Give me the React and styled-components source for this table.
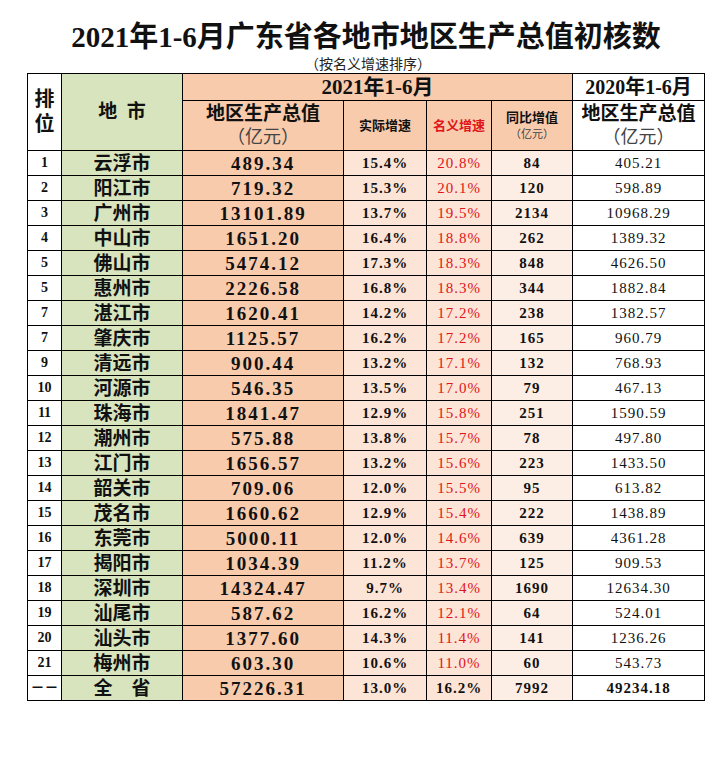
import React from 'react';
import styled, { createGlobalStyle } from 'styled-components';

const GlobalStyle = createGlobalStyle`
  html, body {
    margin: 0;
    padding: 0;
    background: #ffffff;
  }

  body {
    font-family: "Liberation Serif", "Noto Sans CJK SC", serif;
    color: #111;
  }
`;

const GREEN = '#d7e4bd';
const PEACH = '#f8cbad';
const LIGHT = '#fce4d6';

const rows = [
  ['1', '云浮市', '489.34', '15.4%', '20.8%', '84', '405.21'],
  ['2', '阳江市', '719.32', '15.3%', '20.1%', '120', '598.89'],
  ['3', '广州市', '13101.89', '13.7%', '19.5%', '2134', '10968.29'],
  ['4', '中山市', '1651.20', '16.4%', '18.8%', '262', '1389.32'],
  ['5', '佛山市', '5474.12', '17.3%', '18.3%', '848', '4626.50'],
  ['5', '惠州市', '2226.58', '16.8%', '18.3%', '344', '1882.84'],
  ['7', '湛江市', '1620.41', '14.2%', '17.2%', '238', '1382.57'],
  ['7', '肇庆市', '1125.57', '16.2%', '17.2%', '165', '960.79'],
  ['9', '清远市', '900.44', '13.2%', '17.1%', '132', '768.93'],
  ['10', '河源市', '546.35', '13.5%', '17.0%', '79', '467.13'],
  ['11', '珠海市', '1841.47', '12.9%', '15.8%', '251', '1590.59'],
  ['12', '潮州市', '575.88', '13.8%', '15.7%', '78', '497.80'],
  ['13', '江门市', '1656.57', '13.2%', '15.6%', '223', '1433.50'],
  ['14', '韶关市', '709.06', '12.0%', '15.5%', '95', '613.82'],
  ['15', '茂名市', '1660.62', '12.9%', '15.4%', '222', '1438.89'],
  ['16', '东莞市', '5000.11', '12.0%', '14.6%', '639', '4361.28'],
  ['17', '揭阳市', '1034.39', '11.2%', '13.7%', '125', '909.53'],
  ['18', '深圳市', '14324.47', '9.7%', '13.4%', '1690', '12634.30'],
  ['19', '汕尾市', '587.62', '16.2%', '12.1%', '64', '524.01'],
  ['20', '汕头市', '1377.60', '14.3%', '11.4%', '141', '1236.26'],
  ['21', '梅州市', '603.30', '10.6%', '11.0%', '60', '543.73'],
];

const total = ['－－', '全　省', '57226.31', '13.0%', '16.2%', '7992', '49234.18'];

function App() {
  return (
    <Page>
      <GlobalStyle />
      <Title>2021年1-6月广东省各地市地区生产总值初核数</Title>
      <Subtitle>（按名义增速排序）</Subtitle>
      <Table>
        <colgroup>
          <col style={{ width: 34 }} />
          <col style={{ width: 121 }} />
          <col style={{ width: 161 }} />
          <col style={{ width: 83 }} />
          <col style={{ width: 65 }} />
          <col style={{ width: 81 }} />
          <col style={{ width: 132 }} />
        </colgroup>
        <thead>
          <HeadRow $h={27}>
            <Th rowSpan={2} $size={20}>
              排<br />位
            </Th>
            <Th rowSpan={2} $bg={GREEN} $size={19}>地&#8194;市</Th>
            <Th colSpan={4} $bg={PEACH} $size={21}>2021年1-6月</Th>
            <Th $size={20}>2020年1-6月</Th>
          </HeadRow>
          <HeadRow $h={50}>
            <Th $bg={PEACH} $size={19}>
              地区生产总值
              <Unit $size={18}>（亿元）</Unit>
            </Th>
            <Th $bg={PEACH} $size={13}>实际增速</Th>
            <Th $bg={PEACH} $size={13} $color="#e0141a">名义增速</Th>
            <Th $bg={PEACH} $size={13}>
              同比增值
              <Unit $size={11}>（亿元）</Unit>
            </Th>
            <Th $size={19}>
              地区生产总值
              <Unit $size={18}>（亿元）</Unit>
            </Th>
          </HeadRow>
        </thead>
        <tbody>
          {[...rows, total].map((r, i) => {
            const isTotal = i === rows.length;
            return (
              <DataRow key={i}>
                <Rank>{r[0]}</Rank>
                <City>{r[1]}</City>
                <Gdp>{r[2]}</Gdp>
                <Rate>{r[3]}</Rate>
                <Rate $red={!isTotal}>{r[4]}</Rate>
                <Gain>{r[5]}</Gain>
                <Prev $bold={isTotal}>{r[6]}</Prev>
              </DataRow>
            );
          })}
        </tbody>
      </Table>
    </Page>
  );
}

const Page = styled.div`
  width: 728px;
  padding-top: 20px;
  padding-bottom: 73px;
`;

const Title = styled.h1`
  margin: 0;
  padding-left: 4px;
  font-size: 29px;
  line-height: 34px;
  font-weight: bold;
  text-align: center;
  color: #111;
`;

const Subtitle = styled.div`
  padding-left: 8px;
  font-family: "Noto Sans CJK SC", sans-serif;
  font-size: 14px;
  line-height: 19px;
  text-align: center;
  color: #222;
`;

const Table = styled.table`
  margin-left: 27px;
  width: 677px;
  table-layout: fixed;
  border-collapse: collapse;
  border: 1px solid #000;
`;

const HeadRow = styled.tr`
  height: ${p => p.$h}px;
`;

const Th = styled.th`
  padding: 0;
  border: 1px solid #000;
  background: ${p => p.$bg || '#ffffff'};
  color: ${p => p.$color || '#111'};
  font-size: ${p => p.$size}px;
  line-height: 1.25;
  font-weight: bold;
  text-align: center;
  vertical-align: middle;
  white-space: nowrap;
`;

const Unit = styled.span`
  display: block;
  font-size: ${p => p.$size}px;
  font-weight: normal;
  color: #444;
  line-height: 1.3;
`;

const DataRow = styled.tr`
  height: 25px;
`;

const Cell = styled.td`
  padding: 0;
  border: 1px solid #000;
  text-align: center;
  vertical-align: middle;
  white-space: nowrap;
  line-height: 1;
`;

const Rank = styled(Cell)`
  background: #ffffff;
  font-size: 14px;
  font-weight: bold;
`;

const City = styled(Cell)`
  background: ${GREEN};
  font-size: 19px;
  font-weight: bold;
`;

const Gdp = styled(Cell)`
  background: ${PEACH};
  font-size: 19px;
  font-weight: bold;
  letter-spacing: 2px;
`;

const Rate = styled(Cell)`
  background: ${LIGHT};
  font-size: 15px;
  font-weight: ${p => (p.$red ? 'normal' : 'bold')};
  color: ${p => (p.$red ? '#e0141a' : '#111')};
  letter-spacing: 1px;
`;

const Gain = styled(Cell)`
  background: #fdeee5;
  font-size: 15px;
  font-weight: bold;
  letter-spacing: 1px;
`;

const Prev = styled(Cell)`
  background: #ffffff;
  font-size: 15px;
  font-weight: ${p => (p.$bold ? 'bold' : 'normal')};
  letter-spacing: 1px;
`;

export default App;
